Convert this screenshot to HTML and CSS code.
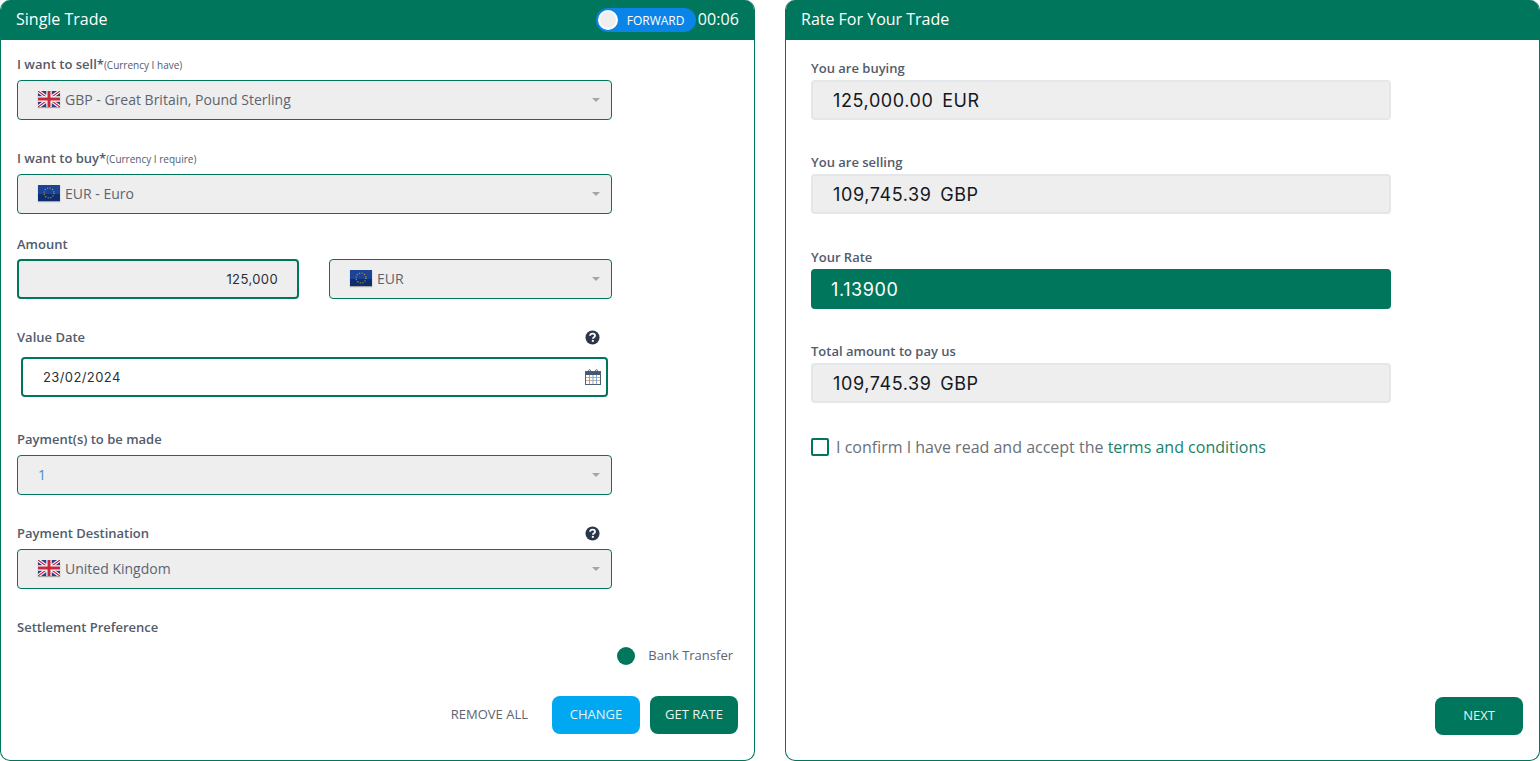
FILE: index.html
```html
<!DOCTYPE html>
<html lang="en">

<head>
	<meta charset="UTF-8">
	<meta name="viewport" content="width=device-width, initial-scale=1.0">
	<title>Single Trade</title>
	<link rel="stylesheet" href="styles.css">
</head>

<body>
	<svg width="0" height="0" class="defs">
		<defs>
			<symbol id="flag-gb" viewBox="0 0 22 16">
				<rect width="22" height="16" fill="#2b3f86" />
				<path d="M0 0 22 16M22 0 0 16" stroke="#fff" stroke-width="3.4" />
				<path d="M0 0 22 16M22 0 0 16" stroke="#c8283c" stroke-width="1.2" />
				<path d="M11 0V16M0 8H22" stroke="#fff" stroke-width="5.4" />
				<path d="M11 0V16M0 8H22" stroke="#c8283c" stroke-width="3" />
			</symbol>
			<symbol id="flag-eu" viewBox="0 0 22 16">
				<rect width="22" height="16" fill="#1c4396" />
				<rect y="9" width="22" height="7" fill="#0e2c70" />
				<circle cx="11" cy="8" r="5" fill="none" stroke="#b5a340" stroke-width="1.1" stroke-dasharray="1.1 1.52" />
			</symbol>
			<symbol id="icon-help" viewBox="0 0 16 16">
				<circle cx="8" cy="8" r="7.5" fill="#2b3648" />
				<path d="M5.4 6.2C5.5 4.6 6.6 3.8 8.1 3.8 9.6 3.8 10.7 4.7 10.7 6 10.7 7.7 8.4 7.8 8.4 9.4" fill="none" stroke="#fff" stroke-width="1.9" />
				<rect x="7.3" y="10.6" width="2.1" height="2" fill="#fff" />
			</symbol>
		</defs>
	</svg>

	<div class="page">
		<section class="card">
			<header class="card-head">
				<h2>Single Trade</h2>
				<div class="head-right">
					<div class="toggle"><span class="knob"></span><span>FORWARD</span></div>
					<span class="timer">00:06</span>
				</div>
			</header>
			<div class="card-body trade-form">
				<div class="field first">
					<label>I want to sell*<small>(Currency I have)</small></label>
					<div class="select">
						<svg class="flag"><use href="#flag-gb" /></svg>GBP - Great Britain, Pound Sterling
					</div>
				</div>
				<div class="field buy">
					<label>I want to buy*<small>(Currency I require)</small></label>
					<div class="select">
						<svg class="flag"><use href="#flag-eu" /></svg>EUR - Euro
					</div>
				</div>
				<div class="field amount">
					<label>Amount</label>
					<div class="amount-row">
						<div class="amount-input">125,000</div>
						<div class="select">
							<svg class="flag"><use href="#flag-eu" /></svg>EUR
						</div>
					</div>
				</div>
				<div class="field date">
					<label class="label-row">Value Date<svg class="help"><use href="#icon-help" /></svg></label>
					<div class="date-input">
						23/02/2024
						<svg class="calendar" viewBox="0 0 16 16">
							<rect x="0.5" y="2.5" width="15" height="13" fill="#fff" stroke="#4f6074" />
							<path d="M1 8.5H15M1 11.5H15" stroke="#d8a98a" />
							<path d="M4.5 6V15M8 6V15M11.5 6V15" stroke="#7fa9d6" />
							<rect x="1" y="3" width="14" height="3" fill="#46586e" />
							<path d="M3.5 4V1.6C3.5 0.4 5.5 0.4 5.5 1.6V4M10.5 4V1.6C10.5 0.4 12.5 0.4 12.5 1.6V4" fill="none" stroke="#46586e" />
						</svg>
					</div>
				</div>
				<div class="field payments">
					<label>Payment(s) to be made</label>
					<div class="select select-num">1</div>
				</div>
				<div class="field destination">
					<label class="label-row">Payment Destination<svg class="help"><use href="#icon-help" /></svg></label>
					<div class="select">
						<svg class="flag"><use href="#flag-gb" /></svg>United Kingdom
					</div>
				</div>
				<div class="field settlement">
					<label>Settlement Preference</label>
					<div class="radio-row"><span class="radio"></span>Bank Transfer</div>
				</div>
				<div class="actions">
					<a class="remove-all">REMOVE ALL</a>
					<button class="btn btn-blue">CHANGE</button>
					<button class="btn">GET RATE</button>
				</div>
			</div>
		</section>

		<section class="card">
			<header class="card-head">
				<h2>Rate For Your Trade</h2>
			</header>
			<div class="card-body rate-panel">
				<div class="rate-field">
					<label>You are buying</label>
					<div class="rate-value">125,000.00 EUR</div>
				</div>
				<div class="rate-field">
					<label>You are selling</label>
					<div class="rate-value">109,745.39 GBP</div>
				</div>
				<div class="rate-field">
					<label>Your Rate</label>
					<div class="rate-value rate-main">1.13900</div>
				</div>
				<div class="rate-field">
					<label>Total amount to pay us</label>
					<div class="rate-value">109,745.39 GBP</div>
				</div>
				<div class="confirm">
					<span class="checkbox"></span>
					<span>I confirm I have read and accept the <a>terms and conditions</a></span>
				</div>
				<div class="next-row">
					<button class="btn btn-next">NEXT</button>
				</div>
			</div>
		</section>
	</div>
</body>

</html>
```

FILE: styles.css
```css
* {
	box-sizing: border-box;
}

html,
body {
	margin: 0;
	height: 100%;
	overflow: hidden;
}

body {
	background: #fff;
	font-family: "Open Sans", "Liberation Sans", sans-serif;
	color: #4a5464;
}

.defs {
	display: block;
	height: 0;
}

.page {
	display: grid;
	grid-template-columns: 755px 755px;
	column-gap: 30px;
	height: 761px;
}

.card {
	display: flex;
	flex-direction: column;
	border: 1px solid #00775c;
	border-top: none;
	border-radius: 10px;
	overflow: hidden;
}

.card-head {
	display: flex;
	justify-content: space-between;
	align-items: center;
	height: 40px;
	margin: 0 -1px;
	padding: 0 16px;
	background: #00775c;
	color: #fff;
}

.card-head h2 {
	margin: 0 0 2px;
	font-size: 16px;
	font-weight: 400;
}

.head-right {
	display: flex;
	align-items: center;
	gap: 2px;
}

.toggle {
	display: flex;
	align-items: center;
	width: 100px;
	height: 24px;
	padding-left: 2px;
	border-radius: 12px;
	background: #0a84e6;
	font-size: 12px;
}

.knob {
	width: 20px;
	height: 20px;
	margin-right: 9px;
	border-radius: 50%;
	background: #eee;
	border: 2px solid #fff;
}

.timer {
	margin-bottom: 2px;
	font-size: 16px;
	letter-spacing: 0.1px;
}

.card-body {
	flex: 1;
	display: flex;
	flex-direction: column;
}

.trade-form {
	padding: 0 16px;
}

.field label,
.rate-field label {
	display: block;
	font-size: 13px;
	font-weight: 600;
	line-height: 18px;
	color: #525b6b;
}

.field label {
	margin-bottom: 6px;
}

.field small {
	font-size: 10px;
	font-weight: 400;
}

.field.first {
	margin-top: 15px;
	width: 595px;
}

.field.buy {
	margin-top: 29px;
	width: 595px;
}

.field.amount {
	margin-top: 21px;
	width: 595px;
}

.field.date {
	margin-top: 29px;
	width: 595px;
}

.field.date label {
	margin-bottom: 11px;
}

.field.payments {
	margin-top: 33px;
	width: 595px;
}

.field.payments label {
	margin-bottom: 7px;
}

.field.destination {
	margin-top: 29px;
	width: 595px;
}

.field.destination label {
	margin-bottom: 7px;
}

.field.settlement {
	margin-top: 29px;
}

.field .label-row {
	display: flex;
	justify-content: space-between;
	align-items: center;
}

.help {
	width: 15px;
	height: 15px;
	margin-right: 12px;
}

.select {
	display: flex;
	align-items: center;
	position: relative;
	height: 40px;
	padding: 0 0 2px 20px;
	border: 1px solid #00775c;
	border-radius: 4px;
	background: #eee;
	font-size: 14px;
	color: #5d6470;
}

.select::after {
	content: "";
	position: absolute;
	right: 11px;
	top: 17px;
	border-left: 4px solid transparent;
	border-right: 4px solid transparent;
	border-top: 4px solid #a5a5a5;
}

.select-num {
	color: #4a8ac4;
}

.flag {
	width: 22px;
	height: 16px;
	margin-right: 5px;
	box-shadow: 0 1px 1px rgba(0, 0, 0, 0.3);
}

.amount-row {
	display: grid;
	grid-template-columns: 282px 283px;
	column-gap: 30px;
}

.amount-input {
	height: 40px;
	padding-right: 19px;
	border: 2px solid #00775c;
	border-radius: 4px;
	background: #eee;
	text-align: right;
	font-family: Inter, "Liberation Sans", sans-serif;
	font-size: 13px;
	letter-spacing: 0.4px;
	line-height: 36px;
	color: #2a2f38;
}

.date-input {
	display: flex;
	justify-content: space-between;
	align-items: center;
	height: 40px;
	margin: 0 4px;
	padding: 0 5px 0 20px;
	border: 2px solid #00775c;
	border-radius: 4px;
	font-family: Inter, "Liberation Sans", sans-serif;
	font-size: 13px;
	letter-spacing: 0.4px;
	color: #2a2f38;
}

.calendar {
	width: 16px;
	height: 16px;
}

.radio-row {
	display: flex;
	justify-content: flex-end;
	align-items: center;
	height: 20px;
	margin-top: 9px;
	padding-right: 5px;
	font-size: 13px;
	color: #5d6470;
}

.radio {
	width: 18px;
	height: 18px;
	margin: 2px 13px 0 0;
	border-radius: 50%;
	background: #00775c;
}

.actions {
	display: flex;
	justify-content: flex-end;
	align-items: center;
	margin-top: 31px;
}

.remove-all {
	margin: 0 24px 2px 0;
	font-size: 13px;
	color: #5d6470;
}

.btn {
	width: 88px;
	height: 38px;
	padding: 0 0 2px;
	margin-left: 10px;
	border: none;
	border-radius: 8px;
	background: #00775c;
	color: #e9f2ee;
	font-family: "Open Sans", "Liberation Sans", sans-serif;
	font-size: 13px;
}

.btn-blue {
	margin-left: 0;
	background: #00a7f1;
}

.rate-panel {
	padding: 0 16px 0 25px;
}

.rate-field {
	width: 580px;
	margin-bottom: 33.33px;
}

.rate-field:first-child {
	margin-top: 19px;
}

.rate-field label {
	margin-bottom: 3px;
}

.rate-value {
	height: 40px;
	padding-left: 20px;
	border: 2px solid #e4e7e9;
	border-radius: 4px;
	background: #eee;
	font-family: Inter, "Liberation Sans", sans-serif;
	font-size: 18px;
	letter-spacing: 0.6px;
	word-spacing: 3px;
	line-height: 38px;
	color: #14181f;
}

.rate-main {
	padding-left: 18px;
	border-color: #00775c;
	background: #00775c;
	color: #fff;
}

.confirm {
	display: flex;
	align-items: center;
	gap: 7px;
	font-size: 16px;
	color: #6a7077;
}

.confirm a {
	color: #1a8168;
}

.checkbox {
	width: 18px;
	height: 18px;
	border: 2px solid #00775c;
	border-radius: 2px;
}

.next-row {
	flex: 1;
	display: flex;
	justify-content: flex-end;
	align-items: flex-end;
	padding-bottom: 25px;
}
```
